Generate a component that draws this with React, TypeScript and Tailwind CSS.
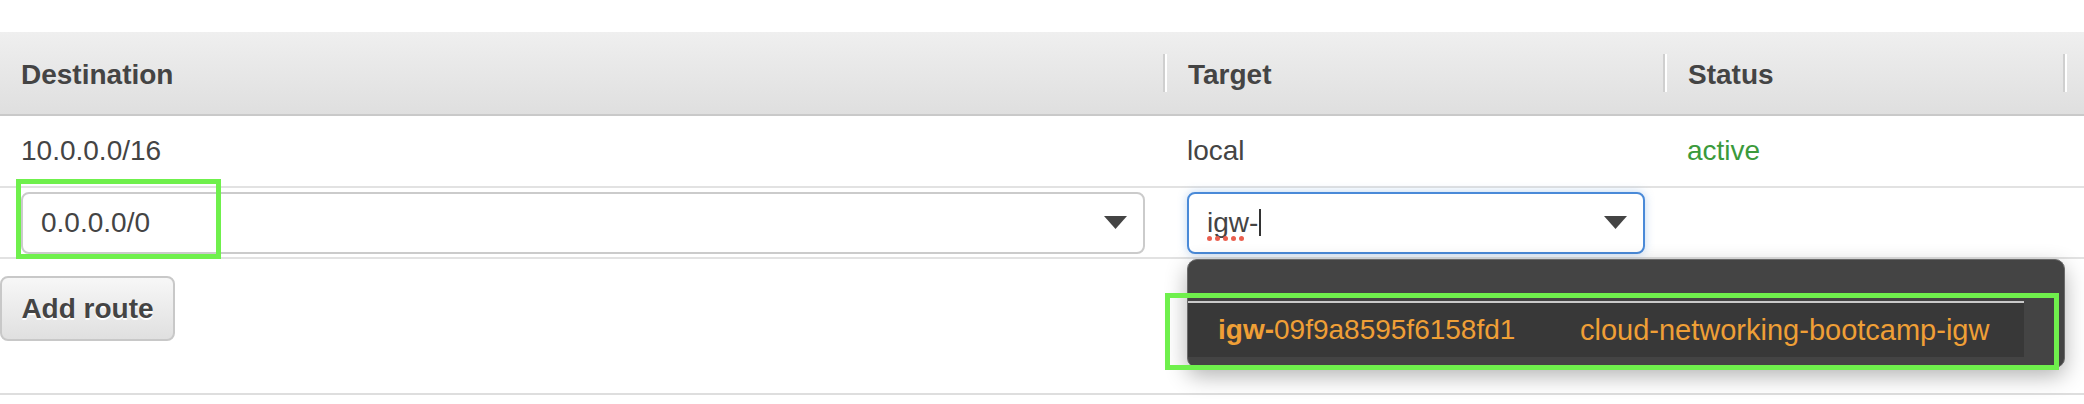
import React from "react";

const Sep = () => (
  <div className="w-[4px] h-[38px] shrink-0 border-l-2 border-[#cfcfcf] bg-white" />
);

function Arrow() {
  return (
    <svg width="23" height="13" viewBox="0 0 23 13" className="shrink-0">
      <path d="M0 0h23L11.5 13z" fill="#444" />
    </svg>
  );
}

// spellcheck squiggle under the typed text
function SpellDots() {
  return (
    <span className="absolute left-0 top-[27px] flex gap-[3px]">
      {[0, 1, 2, 3, 4].map((i) => (
        <span key={i} className="w-[5px] h-[5px] rounded-full bg-[#ea5f4e]" />
      ))}
    </span>
  );
}

export default function App() {
  return (
    <div className="relative w-[2084px] h-[404px] overflow-hidden bg-white font-['Liberation_Sans',Arial,sans-serif] text-[28px] leading-none text-[#444]">
      <div className="pt-8">
        {/* header */}
        <div className="flex items-center h-[84px] border-b-2 border-[#c9c9c9] bg-gradient-to-b from-[#efefef] to-[#dfdfdf] font-bold">
          <div className="w-[1163px] pl-[21px] pt-[4px]">Destination</div>
          <Sep />
          <div className="w-[496px] pl-[21px] pt-[4px]">Target</div>
          <Sep />
          <div className="w-[396px] pl-[21px] pt-[4px]">Status</div>
          <Sep />
        </div>

        {/* existing route */}
        <div className="flex items-center h-[72px] border-b-2 border-[#e2e2e2]">
          <div className="w-[1166px] px-[21px]">10.0.0.0/16</div>
          <div className="w-[500px] px-[21px]">local</div>
          <div className="flex-1 pl-[21px] text-[#3b9a3b]">active</div>
        </div>

        {/* new route */}
        <div className="flex items-center h-[71px] border-b-2 border-[#e2e2e2]">
          <div className="w-[1166px] px-[21px]">
            <div className="flex items-center justify-between h-[62px] pl-[18px] pr-[16px] border-2 border-[#cbcbcb] rounded-[8px] bg-white">
              <span>0.0.0.0/0</span>
              <Arrow />
            </div>
          </div>
          <div className="w-[500px] px-[21px]">
            <div className="flex items-center justify-between h-[62px] pl-[18px] pr-[16px] border-2 border-[#4a8ad8] rounded-[8px] bg-white shadow-[0_0_10px_rgba(74,138,216,0.35)]">
              <span className="flex items-center">
                <span className="relative">
                  igw
                  <SpellDots />
                </span>
                <span>-</span>
                <span className="ml-[1px] w-[2px] h-[27px] bg-[#333]" />
              </span>
              <Arrow />
            </div>
          </div>
          <div className="flex-1" />
        </div>

        {/* actions */}
        <div className="h-[136px] border-b-2 border-[#dedede] pt-[17px]">
          <button className="flex items-center justify-center w-[175px] h-[65px] border-2 border-[#c8c8c8] rounded-[8px] bg-gradient-to-b from-[#f7f7f7] to-[#e0e0e0] font-bold text-[#444] [text-shadow:0_2px_0_#fff]">
            Add route
          </button>
        </div>
      </div>

      {/* autocomplete menu */}
      <div className="absolute left-[1187px] top-[259px] w-[878px] h-[109px] rounded-[10px] border border-[#6a6a6a] bg-[#444] pt-[41px] shadow-[0_8px_22px_rgba(0,0,0,0.3)]">
        <div className="flex items-center w-[836px] h-[56px] border-t-2 border-[#c9c9c9] bg-[#383838] pl-[30px] text-[#ef9f36]">
          <span className="w-[362px]">
            <span className="font-bold">igw-</span>09f9a8595f6158fd1
          </span>
          <span className="text-[29px]">cloud-networking-bootcamp-igw</span>
        </div>
      </div>

      {/* annotation boxes */}
      <div className="absolute left-[16px] top-[179px] w-[205px] h-[80px] border-[5px] border-[#6ff04c]" />
      <div className="absolute left-[1165px] top-[293px] w-[894px] h-[77px] border-[5px] border-[#6ff04c]" />
    </div>
  );
}
